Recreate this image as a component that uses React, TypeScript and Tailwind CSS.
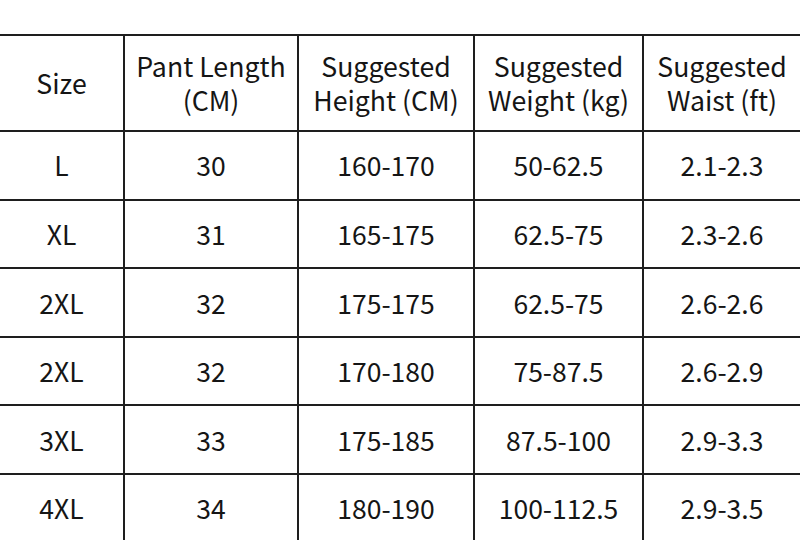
const headers = [
  ["Size"],
  ["Pant Length", "(CM)"],
  ["Suggested", "Height (CM)"],
  ["Suggested", "Weight (kg)"],
  ["Suggested", "Waist (ft)"],
];

const rows = [
  ["L", "30", "160-170", "50-62.5", "2.1-2.3"],
  ["XL", "31", "165-175", "62.5-75", "2.3-2.6"],
  ["2XL", "32", "175-175", "62.5-75", "2.6-2.6"],
  ["2XL", "32", "170-180", "75-87.5", "2.6-2.9"],
  ["3XL", "33", "175-185", "87.5-100", "2.9-3.3"],
  ["4XL", "34", "180-190", "100-112.5", "2.9-3.5"],
];

export default function App() {
  return (
    <div
      className="w-[800px] h-[540px] overflow-hidden bg-white pt-[34px] text-[#151515]"
      style={{ fontFamily: '"Noto Sans CJK SC", "Noto Sans", sans-serif' }}
    >
      <div className="border-t-2 border-[#1e1e1e]">
        <div className="grid grid-cols-[123px_172px_174px_167px_1fr] gap-[2px] bg-[#1e1e1e]">
          {headers.map((lines, i) => (
            <div
              key={i}
              className="h-[94px] bg-white flex flex-col items-center justify-center text-[26.7px] leading-[34px] text-center"
            >
              {lines.map((l) => (
                <span key={l}>{l}</span>
              ))}
            </div>
          ))}
          {rows.map((row, r) =>
            row.map((cell, c) => (
              <div
                key={`${r}-${c}`}
                className="h-[66.6px] bg-white flex items-center justify-center text-[26.5px]"
              >
                {cell}
              </div>
            ))
          )}
        </div>
      </div>
    </div>
  );
}
